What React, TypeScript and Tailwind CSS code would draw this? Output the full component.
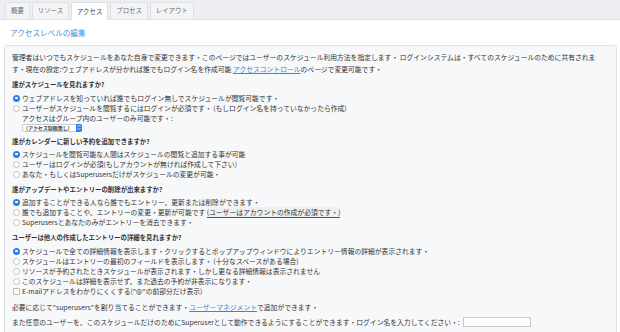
import React from "react";

const tabs = ["概要", "リソース", "アクセス", "プロセス", "レイアウト"];

function Radio({ checked = false }: { checked?: boolean }) {
  return checked ? (
    <span className="w-[7px] h-[7px] rounded-full bg-[#2f80ed] flex items-center justify-center shrink-0">
      <span className="w-[2.5px] h-[2.5px] rounded-full bg-white" />
    </span>
  ) : (
    <span className="w-[7px] h-[7px] rounded-full bg-white border border-[#c4c4c4] shrink-0" />
  );
}

function Row({ checked, box, children }: { checked?: boolean; box?: boolean; children: React.ReactNode }) {
  return (
    <div className="flex items-center gap-[2px] h-[10px] whitespace-nowrap pl-[1px]">
      {box ? (
        <span className="w-[7px] h-[7px] rounded-[1px] bg-white border border-[#b8b8b8] shrink-0" />
      ) : (
        <Radio checked={checked} />
      )}
      <span>{children}</span>
    </div>
  );
}

function Heading({ children, className = "" }: { children: React.ReactNode; className?: string }) {
  return <div className={`h-[10px] leading-[10px] font-bold text-[6.4px] text-[#333] whitespace-nowrap ${className}`}>{children}</div>;
}

export default function App() {
  return (
    <div
      className="w-[620px] h-[332px] bg-white overflow-hidden text-[#333] text-[6.8px] leading-[10px]"
      style={{ fontFamily: '"Noto Sans CJK JP", "Noto Sans", sans-serif' }}
    >
      {/* Tabs */}
      <div className="h-[20px] bg-[#eceef1] border-b border-[#e0e2e5] flex items-end gap-[2px] pl-[5px]">
        {tabs.map((t) => (
          <div
            key={t}
            className={`px-[5px] flex items-center rounded-t-[2px] border border-b-0 text-[6.4px] ${
              t === "アクセス" ? "bg-white border-[#dcdfe3] text-[#444] -mb-[1px] h-[18px]" : "h-[17px] bg-[#f3f4f6] border-[#dfe1e5] text-[#6b6b6b]"
            }`}
          >
            {t}
          </div>
        ))}
      </div>

      {/* Title */}
      <div className="h-[25px] pl-[10px] pt-[1px] flex items-center text-[7.6px] text-[#4a8fd8]">アクセスレベルの編集</div>

      {/* Panel */}
      <div className="ml-[4px] mr-[3px] border border-[#dfe1e4] rounded-[3px] bg-[#f7f8fa] pt-[5px] px-[7px] h-[300px]">
        <div className="leading-[12px] whitespace-nowrap">
          管理者はいつでもスケジュールをあなた自身で変更できます・このページではユーザーのスケジュール利用方法を指定します・ ログインシステムは・すべてのスケジュールのために共有されま
          <br />
          す・現在の設定:ウェブアドレスが分かれば誰でもログイン名を作成可能 <span className="text-[#3b86d8] underline">アクセスコントロール</span>のページで変更可能です・
        </div>

        <Heading className="mt-[5px] mb-[3px]">誰がスケジュールを見れますか?</Heading>
        <Row checked>ウェブアドレスを知っていれば誰でもログイン無しでスケジュールが閲覧可能です・</Row>
        <Row>ユーザーがスケジュールを閲覧するにはログインが必須です・ (もしログイン名を持っていなかったら作成)</Row>
        <div className="h-[10px] pl-[10px] whitespace-nowrap">アクセスはグループ内のユーザーのみ可能です・:</div>
        <div className="h-[9px] pl-[10px] flex items-center">
          <div className="h-[8px] flex items-center bg-white border border-[#c9c9c9] rounded-[2px] text-[5px] font-bold text-[#444] pl-[3px] gap-[6px]">
            <span>(アクセス制限無し)</span>
            <span className="w-[6px] h-[8px] -my-[1px] -mr-[1px] rounded-r-[2px] bg-[#2f80ed] flex flex-col items-center justify-center gap-[1px]">
              <svg width="4" height="2" viewBox="0 0 4 2"><path d="M0.5 1.8 L2 0.3 L3.5 1.8" stroke="white" strokeWidth="0.7" fill="none" /></svg>
              <svg width="4" height="2" viewBox="0 0 4 2"><path d="M0.5 0.2 L2 1.7 L3.5 0.2" stroke="white" strokeWidth="0.7" fill="none" /></svg>
            </span>
          </div>
        </div>

        <Heading className="mt-[5px] mb-[2px]">誰がカレンダーに新しい予約を追加できますか?</Heading>
        <Row checked>スケジュールを閲覧可能な人間はスケジュールの閲覧と追加する事が可能</Row>
        <Row>ユーザーはログインが必須(もしアカウントが無ければ作成して下さい)</Row>
        <Row>あなた・もしくはSuperusersだけがスケジュールの変更が可能・</Row>

        <Heading className="mt-[6px] mb-[2px]">誰がアップデートやエントリーの削除が出来ますか?</Heading>
        <Row checked>追加することができる人なら誰でもエントリー、更新または削除ができます・</Row>
        <Row>
          誰でも追加することや、エントリーの変更・更新が可能です{" "}
          <span className="border-b border-[#555] bg-[#eef0f2]">(ユーザーはアカウントの作成が必須です・)</span>
        </Row>
        <Row>Superusersとあなたのみがエントリーを消去できます・</Row>

        <Heading className="mt-[6px] mb-[3px]">ユーザーは他人の作成したエントリーの詳細を見れますか?</Heading>
        <Row checked>スケジュールで全ての詳細情報を表示します・クリックするとポップアップウィンドウによりエントリー情報の詳細が表示されます・</Row>
        <Row>スケジュールはエントリーの最初のフィールドを表示します・ (十分なスペースがある場合)</Row>
        <Row>リソースが予約されたときスケジュールが表示されます・しかし更なる詳細情報は表示されません</Row>
        <Row>このスケジュールは詳細を表示せず、また過去の予約が非表示になります・</Row>
        <Row box>E-mailアドレスをわかりにくくする("@"の前部分だけ表示)</Row>

        <div className="mt-[6px] h-[10px] whitespace-nowrap">
          必要に応じて"superusers"を割り当てることができます・<span className="text-[#3b86d8] underline">ユーザーマネジメント</span>で追加ができます・
        </div>
        <div className="mt-[5px] h-[10px] whitespace-nowrap flex items-center">
          <span>また任意のユーザーを、このスケジュールだけのためにSuperuserとして動作できるようにすることができます・ログイン名を入力してください・:</span>
          <span className="ml-[3px] w-[68px] h-[10px] bg-white border border-[#c9c9c9] shrink-0" />
        </div>
      </div>
    </div>
  );
}
